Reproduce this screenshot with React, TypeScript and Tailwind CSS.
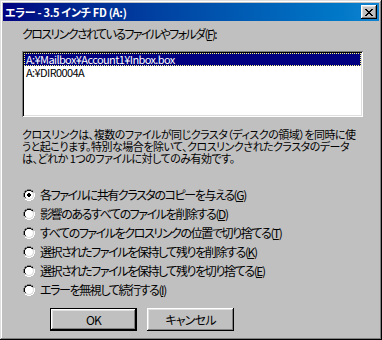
import React from 'react';

const font = "[font-family:'Noto_Sans_CJK_JP','Noto_Sans',sans-serif] [font-feature-settings:'palt']";

const raised =
  'shadow-[inset_-1px_-1px_#000,inset_1px_1px_#fff,inset_-2px_-2px_#808080,inset_2px_2px_#dfdfdf]';

const options = [
  { label: '各ファイルに共有クラスタのコピーを与える', key: 'G', checked: true },
  { label: '影響のあるすべてのファイルを削除する', key: 'D' },
  { label: 'すべてのファイルをクロスリンクの位置で切り捨てる', key: 'T' },
  { label: '選択されたファイルを保持して残りを削除する', key: 'K' },
  { label: '選択されたファイルを保持して残りを切り捨てる', key: 'E' },
  { label: 'エラーを無視して続行する', key: 'I' },
];

const Radio = ({ checked }: { checked?: boolean }) => (
  <svg width="12" height="12" viewBox="0 0 12 12" shapeRendering="crispEdges" className="shrink-0">
    <path d="M4 0h4v1H4zM2 1h2v1H2zM8 1h2v1H8zM1 2h1v2H1zM0 4h1v4H0z" fill="#808080" />
    <path d="M4 1h4v1H4zM2 2h2v1H2zM8 2h2v1H8zM2 3h1v1H2zM1 4h1v4H1zM2 8h1v1H2z" fill="#000" />
    <circle cx="6" cy="6" r="4" fill="#fff" shapeRendering="auto" />
    <path d="M10 4h1v4h-1zM9 8h1v2H9zM8 9h1v1H8zM4 10h4v1H4z" fill="#dfdfdf" />
    <path d="M11 4h1v4h-1zM10 8h1v2h-1zM8 10h2v1H8zM4 11h4v1H4zM2 10h2v1H2z" fill="#fff" />
    {checked && <path d="M5 4h2v1H5zM4 5h4v2H4zM5 7h2v1H5z" fill="#000" />}
  </svg>
);

const Button = ({ children, isDefault }: { children: React.ReactNode; isDefault?: boolean }) => (
  <div
    className={`w-[87px] h-[23px] flex items-center justify-center bg-[#c0c0c0] text-[12px] tracking-[-0.8px] text-black ${
      isDefault
        ? 'shadow-[inset_0_0_0_1px_#000,inset_-2px_-2px_#000,inset_2px_2px_#fff,inset_-3px_-3px_#808080,inset_3px_3px_#dfdfdf]'
        : raised
    }`}
  >
    {children}
  </div>
);

export default function App() {
  return (
    <div
      className={`w-[382px] h-[340px] overflow-hidden bg-[#c0c0c0] p-[3px] text-black ${font} shadow-[inset_-1px_-1px_#000,inset_1px_1px_#dfdfdf,inset_-2px_-2px_#808080,inset_2px_2px_#fff]`}
    >
      {/* Title bar */}
      <div className="h-[18px] flex items-center justify-between bg-gradient-to-r from-[#000080] to-[#1084d0] pl-[2px] pr-[2px]">
        <span className="text-white font-bold text-[11px] tracking-[-0.3px] leading-[18px] whitespace-pre">
          エラー - 3.5 インチ FD (A:)
        </span>
        <div className={`w-[16px] h-[14px] bg-[#c0c0c0] flex items-center justify-center ${raised}`}>
          <svg width="8" height="7" viewBox="0 0 8 7" shapeRendering="crispEdges">
            <path
              d="M0 0h2v1H0zM6 0h2v1H6zM1 1h2v1H1zM5 1h2v1H5zM2 2h4v1H2zM3 3h2v1H3zM2 4h4v1H2zM1 5h2v1H1zM5 5h2v1H5zM0 6h2v1H0zM6 6h2v1H6z"
              fill="#000"
            />
          </svg>
        </div>
      </div>

      <div className="px-[19px] flex flex-col">
        <div className="mt-[6px] h-[13px] text-[12px] tracking-[-1.6px] leading-[13px] whitespace-nowrap">
          クロスリンクされているファイルやフォルダ(<u>F</u>):
        </div>

        {/* List box */}
        <div className="mt-[11px] h-[66px] w-[341px] bg-white p-[2px] shadow-[inset_1px_1px_#808080,inset_-1px_-1px_#fff,inset_2px_2px_#000,inset_-2px_-2px_#dfdfdf]">
          <div className="h-[13px] bg-[#000080] text-white text-[11px] tracking-[-0.6px] leading-[13px] pl-[2px] outline-1 outline-dotted outline-[#ffff80] -outline-offset-1 whitespace-nowrap">
            A:¥Mailbox¥Account1¥Inbox.box
          </div>
          <div className="h-[13px] text-[11px] tracking-[-0.6px] leading-[13px] pl-[2px] whitespace-nowrap">
            A:¥DIR0004A
          </div>
        </div>

        <p className="mt-[11px] text-[11px] tracking-[-0.5px] leading-[12px] whitespace-nowrap">
          クロスリンクは、複数のファイルが同じクラスタ（ディスクの領域）を同時に使
          <br />
          うと起こります。特別な場合を除いて、クロスリンクされたクラスタのデータ
          <br />
          は、どれか 1つのファイルに対してのみ有効です。
        </p>

        {/* Options */}
        <div className="mt-[21px] flex flex-col">
          {options.map((o) => (
            <div key={o.key} className="h-[19px] flex items-center gap-[5px] pl-[1px]">
              <Radio checked={o.checked} />
              <span className="text-[12px] tracking-[-1.4px] leading-[13px] whitespace-nowrap">
                {o.label}(<u>{o.key}</u>)
              </span>
            </div>
          ))}
        </div>

        {/* Buttons */}
        <div className="mt-[9px] ml-[28px] flex gap-[10px]">
          <Button isDefault>OK</Button>
          <Button>キャンセル</Button>
        </div>
      </div>
    </div>
  );
}
